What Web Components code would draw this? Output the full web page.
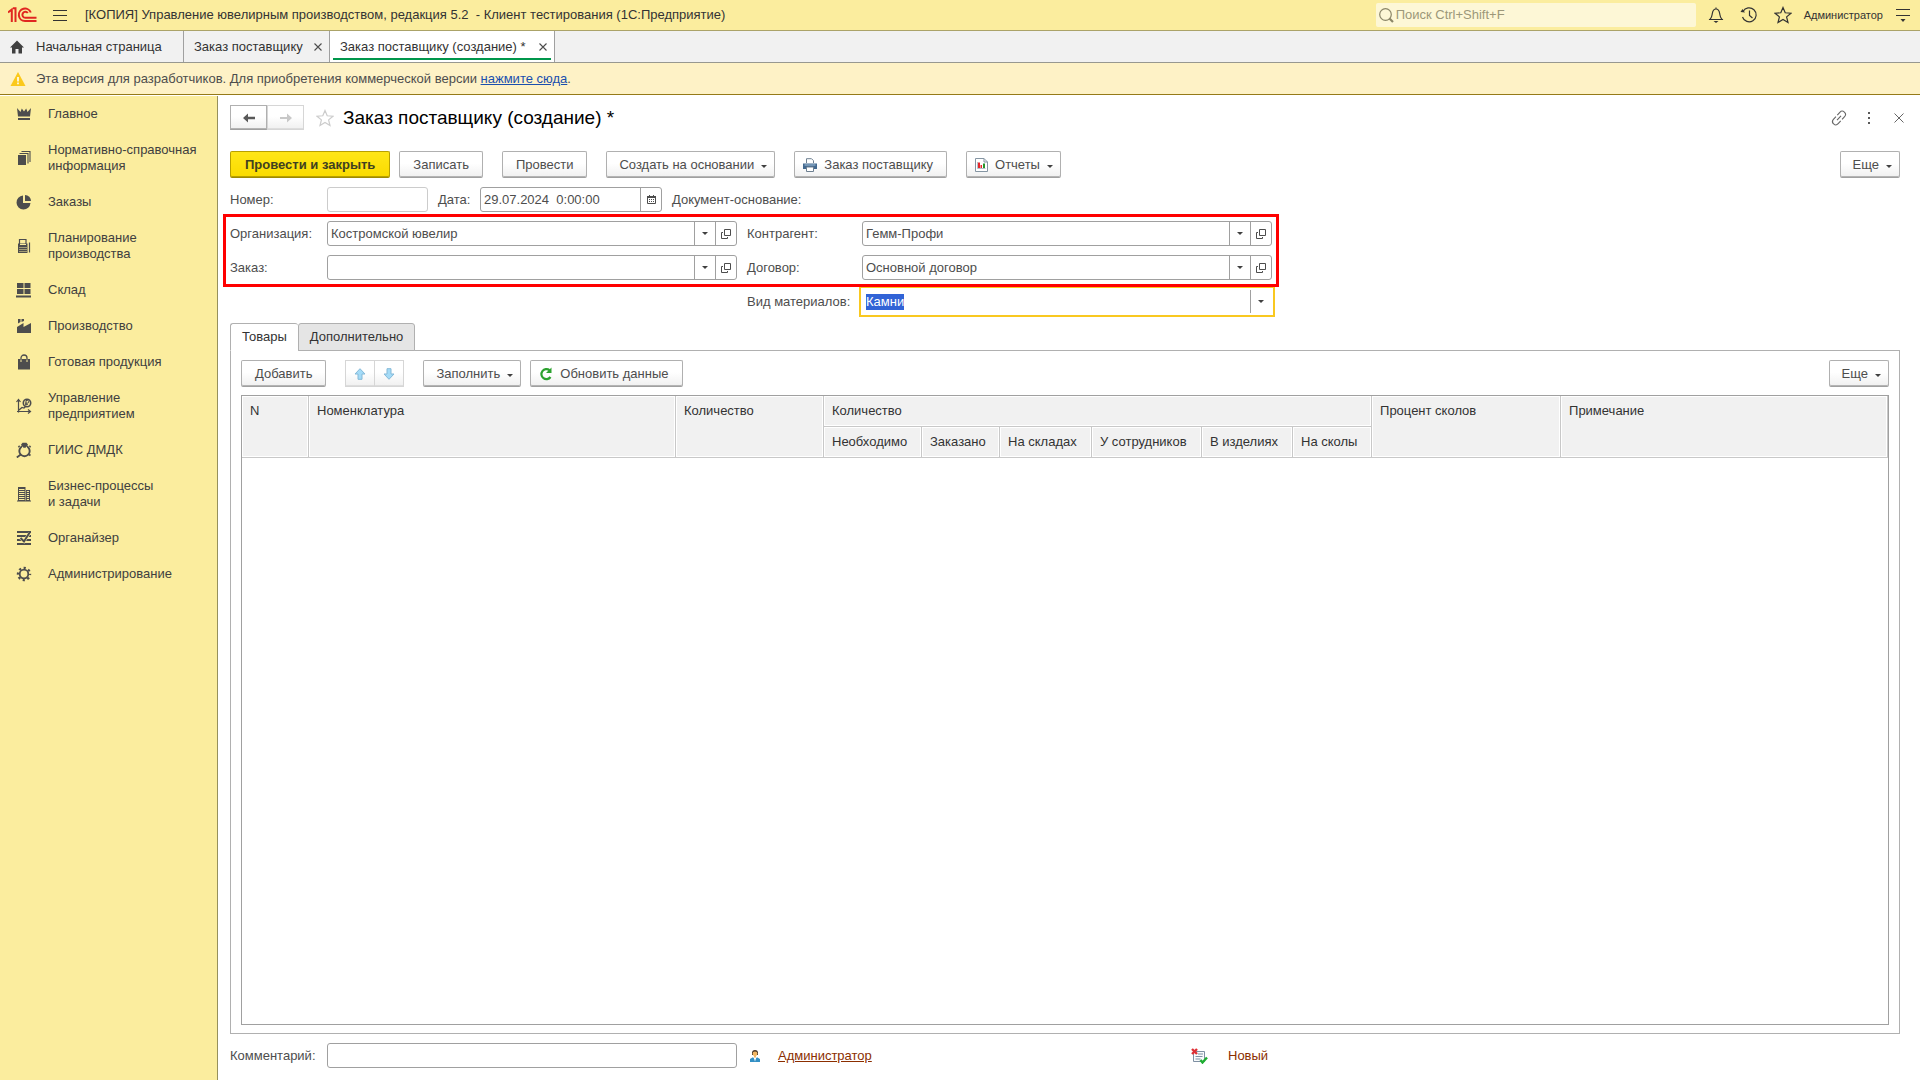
<!DOCTYPE html>
<html lang="ru">
<head>
<meta charset="utf-8">
<title>Заказ поставщику (создание)</title>
<style>
html,body{margin:0;height:100%}
body{font:13px/16px "Liberation Sans",Arial,sans-serif;color:#404040;background:#fff}
</style>
</head>
<body>
<app-shell></app-shell>
<script>
const base = `*,*::before,*::after{box-sizing:border-box}button,input{font:inherit;color:inherit;margin:0}button{cursor:pointer}`;
function define(name, html, css, ready){
  const t = document.createElement('template');
  t.innerHTML = `<style>${base}${css}</style>${html}`;
  customElements.define(name, class extends HTMLElement{
    constructor(){ super(); this.attachShadow({mode:'open'}); }
    connectedCallback(){
      if(this.shadowRoot.childNodes.length) return;
      this.shadowRoot.append(t.content.cloneNode(true));
      if(ready) ready(this, this.shadowRoot);
    }
  });
}

const G = '#4d4d4d';
/* name: [width, height, markup] */
const icons = {
  logo:[29,16,`<g fill="none" stroke="#e02620" stroke-width="2"><path d="M0 5.500 3.800 2.500V15M5 1.200H7.500V15"/><path d="M28.500 14H17A6.200 6.200 0 1 1 22.800 5.500M28.500 10.800H17.500A3 3 0 1 1 19.800 6"/></g>`],
  menu:[14,12,`<path d="M0 1.500h14M0 6.500h14M0 11.500h14" stroke="#333"/>`],
  search:[15,15,`<circle cx="6.500" cy="6.500" r="5.800" fill="none" stroke="#8b8668" stroke-width="1.200"/><path d="M10.500 10.500 14 14" stroke="#8b8668" stroke-width="2.200"/>`],
  bell:[16,18,`<path d="M8 1.500V3M2 13.500C4 11.500 4 9.500 4.300 7.500 4.800 4.500 6 3 8 3s3.200 1.500 3.700 4.500c.3 2 .3 4 2.300 6ZM1 13.500h14" fill="none" stroke="#333" stroke-width="1.200"/><path d="M5.500 15h5L8 17Z" fill="#333"/>`],
  clock:[18,18,`<path d="M3 5.500A7 7 0 1 1 2.500 11M9.500 4.500V9.500L12.500 12" fill="none" stroke="#333" stroke-width="1.200"/><path d="M.5 6 5 6.500 2.500 3Z" fill="#333"/>`],
  star:[18,18,`<path d="m9 1.500 2.200 5.300 5.800.4-4.400 3.700 1.400 5.600-5-3-5 3 1.400-5.600L1 7.200l5.800-.4Z" fill="none" stroke="currentColor" stroke-width="1.200"/>`],
  service:[16,14,`<path d="M1 1.500h14M1 7.500h14" stroke="#333"/><path d="M5.500 11h5L8 14Z" fill="#333"/>`],
  home:[14,14,`<path d="M7 .5 14 7.500H12V13.500H8.500V9h-3v4.500H2V7.500H0Z" fill="#404040"/>`],
  close:[8,8,`<path d="M.5.5l7 7M7.500.5l-7 7" stroke="#4d4d4d" stroke-width="1.100"/>`],
  bigclose:[12,12,`<path d="M1.500 1.500l9 9M10.500 1.500l-9 9" stroke="#666"/>`],
  warn:[16,14,`<path d="M8 0 15.500 14H.5Z" fill="#fbc91c"/><path d="M7.200 5h1.600v4.500H7.200ZM7.200 10.500h1.600v1.700H7.200Z" fill="#fff"/>`],
  link:[16,16,`<g transform="rotate(-48 8 8)" fill="none" stroke="#666" stroke-width="1.100"><path d="M7 4.800H3.200a3.200 3.200 0 0 0 0 6.400H7M9 4.800h3.800a3.200 3.200 0 0 1 0 6.400H9M5 8h6"/></g>`],
  dots:[4,12,`<path d="M1 0h2v2H1ZM1 5h2v2H1ZM1 10h2v2H1Z" fill="#595959"/>`],
  back:[14,10,`<path d="M1 5 6 .5V3.700h7V6.300H6V9.500Z" fill="#595959"/>`],
  fwd:[14,10,`<path d="M13 5 8 .5V4H1v2h7v3.500Z" fill="#c8c8c8"/>`],
  open:[10,10,`<path d="M3.500.5h6v6h-6ZM2 3.500H.5v6h6V8" fill="none" stroke="#4d4d4d"/>`],
  cal:[9,9,`<path d="M.5 1.500h8v7h-8Z" fill="#fff" stroke="#4d4d4d"/><path d="M0 1h9v2H0ZM2 0h1v1H2ZM6 0h1v1H6Z" fill="#4d4d4d"/><path d="M2 4h1v1H2Zm2 0h1v1H4Zm2 0h1v1H6ZM2 6h1v1H2Zm2 0h1v1H4Zm2 0h1v1H6Z" fill="#4d4d4d"/>`],
  up:[12,12,`<path d="M6 .7 11 6H8v5.300H4V6H1Z" fill="#a4dbf7" stroke="#84b9d8"/>`],
  down:[12,12,`<path d="M6 11.300 11 6H8V.7H4V6H1Z" fill="#a4dbf7" stroke="#84b9d8"/>`],
  refresh:[14,14,`<path d="M10.500 3.200A5 5 0 1 0 11.500 10" fill="none" stroke="#2ba12e" stroke-width="2.200"/><path d="M12.500.5V6H7Z" fill="#2ba12e"/>`],
  print:[14,14,`<path d="M3.500 5V.7h5l2 2V5" fill="#fff" stroke="#6d7f90"/><path d="M0 5.500h14V11H0Z" fill="#42688f"/><path d="M1.500 7h11" stroke="#a4c2dc"/><path d="M3.500 9h7v4.500h-7Z" fill="#fff" stroke="#6d7f90"/>`],
  report:[13,14,`<path d="M.5.5h8.500l3.500 3.500v9.500H.5Z" fill="#fff" stroke="#8595a3"/><path d="M9 .5V4h3.500" fill="none" stroke="#8595a3"/><path d="M2.500 4v6.500h8" fill="none" stroke="#8595a3" stroke-width=".6"/><path d="M3 4.500h2V10H3ZM5.500 7h1.500v3H5.500Z" fill="#e5262b"/><path d="M8 5.500h2V10H8Z" fill="#25952b"/>`],
  user:[12,13,`<path d="M3 4a3 3 0 0 1 6 0v2H3Z" fill="#4a3728"/><circle cx="6" cy="4.800" r="2.400" fill="#f1b765"/><path d="M5 6h2v3H5Z" fill="#f1b765"/><path d="M1 13V10L4 8.300l2 2 2-2L11 10v3Z" fill="#3390c5"/><path d="m4.700 8.500 1.300 4 1.300-4Z" fill="#fff"/>`],
  state:[17,16,`<path d="M2.500 3.500h11v10h-11Z" fill="#f8fafc" stroke="#7f90a3"/><path d="M7 6h5M4.500 8.500h7M4.500 11h5" stroke="#7f90a3"/><path d="m1 1 5 5M6 1 1 6" stroke="#de2f35" stroke-width="2.400"/><path d="m9.500 12 2 2.500L16 9.500" fill="none" stroke="#1eae32" stroke-width="2.400"/>`],
  crown:[16,16,`<path d="M1 2l3.500 4L5.800 2.500 8 5.500l2.200-3L11.500 6 15 2l-1 8.500H2ZM2 12h12v2H2Z" fill="${G}"/>`],
  books:[16,16,`<path d="M2 5h8v10H2Z" fill="${G}"/><path d="M3.500 3.500H12V13.500M5.500 1.500H14V12" fill="none" stroke="${G}" stroke-width="1.100"/>`],
  pie:[16,16,`<path d="M7 1.500V9h7.500A7 7 0 1 1 7 1.500Z" fill="${G}"/><path d="M9 1a6 6 0 0 1 6 6H9Z" fill="${G}"/>`],
  calc:[16,16,`<path d="M2 5.500h9.500v9.500H2Z" fill="${G}"/><path d="M3.500 6V1.500h6.500V6" fill="none" stroke="${G}" stroke-width="1.200"/><path d="M13.500 4.500v10" stroke="${G}" stroke-width="1.200"/><path d="M3.500 9.500h7M3.500 11.500h7M3.500 13.500h7" stroke="#fbed9e" stroke-dasharray="1 1"/><path d="M4 6.500h6" stroke="#fbed9e"/>`],
  store:[16,16,`<path d="M1 1h6.500v5H1ZM8.500 1H14.500v5H8.500ZM1 7h6.500v5H1ZM8.500 7H14.500v5H8.500ZM0 13.500h15v2H0Z" fill="${G}"/>`],
  factory:[16,16,`<path d="M2 1h2.500v3L2 5.500ZM5.500 1H8v2L5.500 4ZM1 15V9l6.500-4v4L15 5v10Z" fill="${G}"/>`],
  bag:[16,16,`<path d="M2 5h12v10.500H2Z" fill="${G}"/><path d="M5 6V4a3 3 0 0 1 6 0v2" fill="none" stroke="${G}" stroke-width="1.300"/><path d="M5 5.500V8M11 5.500V8" stroke="#fbed9e"/>`],
  manage:[16,16,`<path d="M2.500 14.500V2M.5 4l2-2.500 2 2.500M1 13.500h13M12 11.500l2.500 2-2.500 2M3 12l3-2.500 2 .5 2-2" fill="none" stroke="${G}" stroke-width="1.200"/><circle cx="11" cy="5" r="3.700" fill="none" stroke="${G}" stroke-width="1.600"/><path d="M10 7.500v-5h1.500a1.300 1.300 0 0 1 0 2.600H9M9 6.300h3" fill="none" stroke="${G}"/>`],
  ring:[16,16,`<circle cx="8.500" cy="9" r="5.200" fill="none" stroke="${G}" stroke-width="1.900"/><path d="M6 5.500h5" stroke="#fbed9e" stroke-width="2"/><path d="M6.500.8h4l1.500 2-2.500 3h-2L5 2.800Z" fill="${G}"/><path d="M4.800 12.500.8 15.500M13 12.500l1.500 1M3.500 5l-1-1M13.500 5l1-1" stroke="${G}" stroke-width="1.800"/>`],
  building:[16,16,`<path d="M2 1h7.500v14H2ZM10 4h4v11h-4ZM1 14.500h14v1H1Z" fill="${G}"/><path d="M3 3.500h5.500M3 5.500h5.500M3 7.500h5.500M3 9.500h5.500M3 11.500h5.500M3 13.500h5.500M10.800 5.500H13M10.800 7.500H13M10.800 9.500H13M10.800 11.500H13M10.800 13.500H13" stroke="#fbed9e"/>`],
  organizer:[16,16,`<path d="M1 2h14M1 6h14M1 10h14M1 14h14" stroke="${G}" stroke-width="2"/><path d="M4.500 8 8 11.500 13.500 3" fill="none" stroke="#fbed9e" stroke-width="3"/><path d="M4.500 8 8 11.500 14 2" fill="none" stroke="${G}" stroke-width="2"/>`],
  gear:[16,16,`<circle cx="8" cy="8" r="4.300" fill="none" stroke="${G}" stroke-width="1.800"/><circle cx="8" cy="8" r="6.100" fill="none" stroke="${G}" stroke-width="2.200" stroke-dasharray="2.200 2.590" stroke-dashoffset="1.100"/>`]
};
define('ui-icon', '', ':host{display:inline-flex;flex:none}svg{display:block}', (el, r) => {
  const [w,h,m] = icons[el.getAttribute('name')];
  r.innerHTML += `<svg width="${w}" height="${h}" viewBox="0 0 ${w} ${h}" aria-hidden="true">${m}</svg>`;
});

define('ui-button', `<button type="button"><slot name="icon"></slot><slot></slot></button>`, `
:host{display:block;flex:none}
button{display:flex;align-items:center;justify-content:center;gap:7px;height:27px;width:100%;padding:0 13px;border:1px solid #b0b0b0;border-bottom-color:#a0a0a0;border-radius:2px;background:linear-gradient(#fff,#fff 45%,#f0f0f0);box-shadow:inset 0 -1px #b4b4b4;white-space:nowrap}
:host([primary]) button{font-weight:bold;color:#404020;padding:0 14px;background:linear-gradient(#ffe617,#fadb00);border-color:#b8a000;border-bottom-color:#9e8a00;box-shadow:inset 0 -1px #b8a000}
:host([has-icon]) button{padding:0 13px 0 8px}
:host([menu]) button{padding-right:7px;padding-left:12px}
:host([menu][has-icon]) button{padding-left:8px}
:host([menu]) button::after{content:"";border:3px solid transparent;border-top-color:#404040;border-bottom:0;margin-top:3px}
:host([flat]) button{padding:0;border-radius:0;height:var(--flat,27px)}
:host([faint]) button{border-color:#d6d6d6;box-shadow:inset 0 -1px #ddd}
`, (el, r) => { const l = el.getAttribute('label'); if(l) r.querySelector('button').setAttribute('aria-label', l); });

define('ui-field', `<label for="i"><slot></slot></label><div class="box"><input id="i" type="text"></div>`, `
:host{display:flex;align-items:center}
label{flex:none;width:var(--label,97px);white-space:nowrap}
.box{display:flex;flex:1;min-width:0;height:25px;border:1px solid #a0a0a0;border-radius:3px;background:#fff}
input{flex:1;min-width:0;border:0;outline:0;background:none;padding:0 3px}
input::selection{background:#3163d6;color:#fff}
.box button{flex:none;width:21px;padding:0;border:0;border-left:1px solid #a0a0a0;background:none;display:flex;align-items:center;justify-content:center}
.drop::before{content:"";border:3px solid transparent;border-top-color:#404040;border-bottom:0}
:host([disabled]) .box{border-color:#ccc}
:host([active]) .box{border-color:#fff;border-radius:0;outline:2px solid #f9c820;outline-offset:1px}
`, (el, r) => {
  const i = r.querySelector('input'), box = r.querySelector('.box');
  i.value = el.getAttribute('value') || '';
  i.readOnly = el.hasAttribute('disabled');
  const add = (cls, label, icon) => {
    const b = document.createElement('button');
    b.type = 'button'; b.className = cls; b.setAttribute('aria-label', label);
    if(icon) b.innerHTML = `<ui-icon name="${icon}"></ui-icon>`;
    box.append(b);
  };
  const kind = el.getAttribute('kind') || '';
  if(kind.includes('drop')) add('drop', 'Выбрать');
  if(kind.includes('open')) add('open', 'Открыть', 'open');
  if(kind.includes('cal')) add('cal', 'Календарь', 'cal');
  if(el.hasAttribute('active')){ i.focus(); i.select(); }
});

define('app-header', `
<button type="button" aria-label="1С"><ui-icon name="logo"></ui-icon></button>
<button type="button" aria-label="Меню" class="menu"><ui-icon name="menu"></ui-icon></button>
<span class="title">[КОПИЯ] Управление ювелирным производством, редакция 5.2&nbsp; - Клиент тестирования (1С:Предприятие)</span>
<label class="search"><ui-icon name="search"></ui-icon><input type="text" aria-label="Поиск" placeholder="Поиск Ctrl+Shift+F"></label>
<div class="tools">
<button type="button" aria-label="Уведомления"><ui-icon name="bell"></ui-icon></button>
<button type="button" aria-label="История"><ui-icon name="clock"></ui-icon></button>
<button type="button" aria-label="Избранное"><ui-icon name="star"></ui-icon></button></div>
<span class="user">Администратор</span>
<button type="button" aria-label="Сервис"><ui-icon name="service"></ui-icon></button>`, `
:host{display:flex;align-items:center;height:31px;padding:0 9px 0 8px;background:#fbed9e;border-bottom:1px solid #aba368;color:#333}
button{border:0;background:none;padding:0;display:flex}
.menu{margin:0 18px 0 16px}
.title{flex:1;white-space:nowrap}
.search{display:flex;align-items:center;gap:2px;width:320px;height:24px;padding:0 3px;background:#fdf7d6;border-radius:2px}
.search input{flex:1;min-width:0;border:0;outline:0;background:none;padding:0}
.search input::placeholder{color:#9c9779;opacity:1}
.tools{display:flex;align-items:center;gap:16px;margin:0 12px}
.user{font-size:11px;margin-right:12px}
`);

define('app-tabs', `<nav>
<a href="#home" class="home"><ui-icon name="home"></ui-icon>Начальная страница</a>
<span class="tab"><a href="#orders">Заказ поставщику</a><button type="button" aria-label="Закрыть"><ui-icon name="close"></ui-icon></button></span>
<span class="tab on"><a href="#new">Заказ поставщику (создание) *</a><button type="button" aria-label="Закрыть"><ui-icon name="close"></ui-icon></button></span></nav>`, `
:host{display:block;background:#f1f1f1;border-bottom:1px solid #989890}
nav{display:flex;height:31px;color:#333}
a{color:inherit;text-decoration:none;white-space:nowrap}
.home,.tab{display:flex;align-items:center;border-right:1px solid #a0a0a0;padding:0 7px 0 10px}
.home{gap:12px;min-width:184px}
.tab{gap:9px;justify-content:space-between;min-width:146px}
.on{background:#fff;position:relative;min-width:225px}
.on::after{content:"";position:absolute;left:3px;right:3px;bottom:2px;height:2px;background:#00964b}
button{border:0;background:none;padding:0;display:flex}
`);

define('app-notice', `<ui-icon name="warn"></ui-icon><span>Эта версия для разработчиков. Для приобретения коммерческой версии <a href="#buy">нажмите сюда</a>.</span>`, `
:host{display:flex;align-items:center;gap:10px;height:32px;padding:0 10px;background:#fef2c6;border-bottom:1px solid #957a18;margin-bottom:1px;color:#4d4d4d}
a{color:#1a4fae}
`);

define('nav-item', `<a href="#section"><slot name="icon"></slot><span><slot></slot></span></a>`, `
:host{display:block}
a{display:flex;align-items:center;gap:16px;padding:10px 16px;color:inherit;text-decoration:none;white-space:nowrap}
`);
const nav = [['crown','Главное'],['books','Нормативно-справочная<br>информация'],['pie','Заказы'],['calc','Планирование<br>производства'],['store','Склад'],['factory','Производство'],['bag','Готовая продукция'],['manage','Управление<br>предприятием'],['ring','ГИИС ДМДК'],['building','Бизнес-процессы<br>и задачи'],['organizer','Органайзер'],['gear','Администрирование']];
define('app-sidebar', `<nav>${nav.map(([i,t]) => `<nav-item><ui-icon slot="icon" name="${i}"></ui-icon>${t}</nav-item>`).join('')}</nav>`, `
:host{display:block;flex:none;width:218px;background:#fbed9e;border-right:1px solid #96905c;color:#404040}
`);

define('form-title', `
<div class="nav"><ui-button flat label="Назад"><ui-icon name="back"></ui-icon></ui-button><ui-button flat faint label="Вперед"><ui-icon name="fwd"></ui-icon></ui-button></div>
<button type="button" class="fav" aria-label="В избранное"><ui-icon name="star"></ui-icon></button>
<h1>Заказ поставщику (создание) *</h1>
<div class="tools">
<button type="button" aria-label="Ссылка"><ui-icon name="link"></ui-icon></button>
<button type="button" aria-label="Еще"><ui-icon name="dots"></ui-icon></button>
<button type="button" aria-label="Закрыть"><ui-icon name="bigclose"></ui-icon></button></div>`, `
:host{display:flex;align-items:center;height:25px}
.nav{display:flex;--flat:25px}
.nav ui-button{width:37px}
button{border:0;background:none;padding:0;display:flex;justify-content:center}
.fav{color:#ccc;margin:0 9px 0 12px}
h1{flex:1;margin:0;font-size:19px;line-height:24px;font-weight:normal;color:#000;white-space:nowrap}
.tools{display:flex;align-items:center;margin-right:-14px}
.tools button{width:30px}
`);

define('form-commands', `
<ui-button primary>Провести и закрыть</ui-button>
<ui-button class="near">Записать</ui-button>
<ui-button>Провести</ui-button>
<ui-button menu>Создать на основании</ui-button>
<ui-button has-icon><ui-icon slot="icon" name="print"></ui-icon>Заказ поставщику</ui-button>
<ui-button has-icon menu><ui-icon slot="icon" name="report"></ui-icon>Отчеты</ui-button>
<ui-button menu class="more">Еще</ui-button>`, `
:host{display:flex;gap:19px}
.near{margin-left:-10px}
.more{margin-left:auto}
`);

define('order-fields', `
<div class="line">
<ui-field class="num" disabled>Номер:</ui-field>
<ui-field class="date" kind="cal" value="29.07.2024  0:00:00">Дата:</ui-field>
<span>Документ-основание:</span></div>
<div class="marked">
<ui-field kind="drop open" value="Костромской ювелир">Организация:</ui-field>
<ui-field class="r" kind="drop open" value="Гемм-Профи">Контрагент:</ui-field>
<ui-field kind="drop open">Заказ:</ui-field>
<ui-field class="r" kind="drop open" value="Основной договор">Договор:</ui-field></div>
<div class="grid"><ui-field class="r last" active kind="drop" value="Камни">Вид материалов:</ui-field></div>`, `
:host{display:flex;flex-direction:column;gap:9px;max-width:1042px}
.line{display:flex;align-items:center;gap:10px}
.num{width:198px}.date{width:224px;--label:42px}
.marked,.grid{display:grid;grid-template-columns:507fr 525fr;gap:9px 10px}
.marked{outline:3px solid #f00;outline-offset:4px;z-index:1}
.r{--label:115px}.last{grid-column:2}
`);

define('goods-table', `<table>
<colgroup><col class="c1"><col class="c2"><col class="c3"><col class="c4"><col class="c5"><col class="c6"><col class="c7"><col class="c8"><col class="c9"><col class="c10"><col></colgroup>
<thead>
<tr><th rowspan="2">N</th><th rowspan="2">Номенклатура</th><th rowspan="2">Количество</th><th colspan="6">Количество</th><th rowspan="2">Процент сколов</th><th rowspan="2">Примечание</th></tr>
<tr><th>Необходимо</th><th>Заказано</th><th>На складах</th><th>У сотрудников</th><th>В изделиях</th><th>На сколы</th></tr>
</thead><tbody></tbody></table>`, `
:host{display:block;flex:1;border:1px solid #a0a0a0;background:#fff}
table{width:100%;table-layout:fixed;border-collapse:separate;border-spacing:0;color:#333}
th{height:31px;padding:7px 7px 0 8px;font-weight:normal;text-align:left;vertical-align:top;background:#f1f1f1;border-right:1px solid #c8c8c8;border-bottom:1px solid #c8c8c8;box-shadow:inset 0 0 0 1px #fff;white-space:nowrap}
.c1{width:67px}.c2{width:367px}.c3{width:148px}.c4{width:98px}.c5{width:78px}.c6{width:92px}.c7{width:110px}.c8{width:91px}.c9{width:79px}.c10{width:189px}
`);

define('goods-panel', `
<div class="tabs" role="tablist"><button type="button" role="tab" aria-selected="true">Товары</button><button type="button" role="tab" aria-selected="false">Дополнительно</button></div>
<div class="panel">
<div class="bar">
<ui-button>Добавить</ui-button>
<div class="pair"><ui-button flat faint label="Вверх"><ui-icon name="up"></ui-icon></ui-button><ui-button flat faint label="Вниз"><ui-icon name="down"></ui-icon></ui-button></div>
<ui-button menu>Заполнить</ui-button>
<ui-button has-icon class="near"><ui-icon slot="icon" name="refresh"></ui-icon>Обновить данные</ui-button>
<ui-button menu class="more">Еще</ui-button></div>
<goods-table></goods-table></div>`, `
:host{display:flex;flex-direction:column;flex:1}
.tabs{display:flex;position:relative;z-index:1;margin-bottom:-1px;color:#333}
.tabs button{height:28px;padding:0 11px;border:1px solid #b0b0b0;background:#e5e5e5;border-radius:3px 3px 0 0}
.tabs button[aria-selected=true]{background:#fff;border-bottom-color:#fff;border-right:0}
.panel{display:flex;flex-direction:column;flex:1;gap:8px;padding:9px 10px 8px;border:1px solid #b0b0b0}
.bar{display:flex;gap:19px}
.pair{display:flex}.pair ui-button{width:30px}.pair ui-button + ui-button{margin-left:-1px}
.near{margin-left:-10px}.more{margin-left:auto}
`);

define('form-footer', `
<ui-field>Комментарий:</ui-field>
<div class="who"><ui-icon name="user"></ui-icon><a href="#user">Администратор</a></div>
<div class="state"><ui-icon name="state"></ui-icon><span>Новый</span></div>`, `
:host{display:flex;align-items:center}
ui-field{width:507px}
.who{display:flex;align-items:center;gap:17px;width:454px;padding-left:12px;color:#8b2e00}
a{color:inherit}
.state{display:flex;align-items:center;gap:20px;color:#8b2e00}
`);

define('order-form', `<form-title></form-title><form-commands></form-commands><order-fields></order-fields><goods-panel></goods-panel><form-footer></form-footer>`, `
:host{display:flex;flex-direction:column;flex:1;min-width:0;gap:9px;padding:9px 20px 12px 12px;color:#4d4d4d}
form-title{margin-bottom:12px}
`);

define('app-shell', `<app-header></app-header><app-tabs></app-tabs><app-notice></app-notice><main><app-sidebar></app-sidebar><order-form></order-form></main>`, `
:host{display:flex;flex-direction:column;min-height:100vh}
main{display:flex;flex:1}
`);
</script>
</body>
</html>
